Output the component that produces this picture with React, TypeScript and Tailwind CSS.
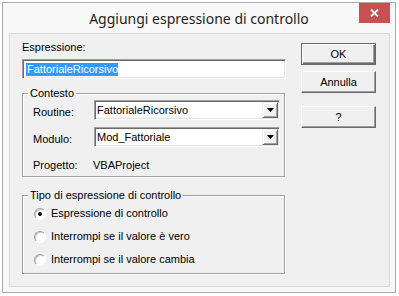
import React from "react";

const font = { fontFamily: '"Liberation Sans", Arial, sans-serif' };

function Combo({ value }: { value: string }) {
  return (
    <div className="w-[186px] h-[20px] flex bg-white border border-t-[#a0a0a0] border-l-[#a0a0a0] border-r-white border-b-white shadow-[inset_1px_1px_0_#696969,inset_-1px_-1px_0_#e3e3e3] p-[1px]">
      <div className="flex-1 flex items-center pl-[1px] text-[11px] leading-[13px] text-black">{value}</div>
      <div className="w-[16px] h-full bg-[#f0f0f0] border border-t-[#f0f0f0] border-l-[#f0f0f0] border-r-[#696969] border-b-[#696969] shadow-[inset_1px_1px_0_#fff,inset_-1px_-1px_0_#a0a0a0] flex items-center justify-center">
        <svg width="7" height="4" viewBox="0 0 7 4">
          <polygon points="0,0 7,0 3.5,4" fill="#000" />
        </svg>
      </div>
    </div>
  );
}

function Radio({ checked, label }: { checked?: boolean; label: string }) {
  return (
    <div className="flex items-center h-[13px] pl-[11px]">
      <div className="w-[12px] h-[12px] rounded-full bg-white border border-t-[#a0a0a0] border-l-[#a0a0a0] border-r-white border-b-white shadow-[inset_1px_1px_0_#c8c8c8] flex items-center justify-center">
        {checked && <div className="w-[4px] h-[4px] rounded-full bg-black" />}
      </div>
      <span className="ml-[5px] text-[11px] leading-[13px] text-black">{label}</span>
    </div>
  );
}

export default function App() {
  return (
    <div className="w-[399px] h-[296px] bg-white p-[2px]" style={font}>
      <div className="w-[394px] h-[291px] border border-[#aaaaaa] bg-[#f8f8f8] flex flex-col">
        <div className="relative h-[30px] flex items-center justify-center">
          <span className="text-[14px] text-[#1e1e1e]" style={{ fontFamily: '"Noto Sans", "Open Sans", sans-serif' }}>
            Aggiungi espressione di controllo
          </span>
          <div className="absolute right-[5px] top-0 w-[31px] h-[20px] bg-[#c75050] flex items-center justify-center">
            <svg width="9" height="8" viewBox="0 0 9 8">
              <path d="M1 0.5 L8 7.5 M8 0.5 L1 7.5" stroke="#fff" strokeWidth="1.8" />
            </svg>
          </div>
        </div>
        <div className="w-[381px] h-[254px] ml-[6px] border border-[#d9d9d9] bg-[#f0f0f0] flex pl-[12px]">
          <div className="w-[264px] pt-[7px] flex flex-col">
            <div className="h-[13px] text-[11px] leading-[13px] text-black">Espressione:</div>
            <div className="mt-[5px] h-[20px] w-[264px] bg-white border border-t-[#a0a0a0] border-l-[#a0a0a0] border-r-white border-b-white shadow-[inset_1px_1px_0_#696969,inset_-1px_-1px_0_#e3e3e3] flex items-center pl-[3px]">
              <span className="bg-[#3399ff] text-white text-[11px] leading-[13px] pl-[1px]">FattorialeRicorsivo</span>
            </div>
            <fieldset className="mt-[8px] w-[263px] border border-[#a0a0a0] shadow-[inset_1px_1px_0_#fff,1px_1px_0_#fff] pb-[4px]">
              <legend className="ml-[5px] px-[2px] bg-[#f0f0f0] text-[11px] leading-[13px] text-black">Contesto</legend>
              <div className="pl-[10px] flex flex-col">
                <div className="flex">
                  <div className="w-[61px] pt-[6px] text-[11px] leading-[13px] text-black">Routine:</div>
                  <Combo value="FattorialeRicorsivo" />
                </div>
                <div className="flex mt-[7px]">
                  <div className="w-[61px] pt-[6px] text-[11px] leading-[13px] text-black">Modulo:</div>
                  <Combo value="Mod_Fattoriale" />
                </div>
                <div className="flex mt-[12px] h-[13px] text-[11px] leading-[13px] text-black">
                  <div className="w-[60px]">Progetto:</div>
                  <div>VBAProject</div>
                </div>
              </div>
            </fieldset>
            <fieldset className="mt-[12px] w-[263px] border border-[#a0a0a0] shadow-[inset_1px_1px_0_#fff,1px_1px_0_#fff] pb-[7px]">
              <legend className="ml-[5px] px-[2px] bg-[#f0f0f0] text-[11px] leading-[13px] text-black">Tipo di espressione di controllo</legend>
              <div className="mt-[5px] flex flex-col gap-[10px]">
                <Radio checked label="Espressione di controllo" />
                <Radio label="Interrompi se il valore è vero" />
                <Radio label="Interrompi se il valore cambia" />
              </div>
            </fieldset>
          </div>
          <div className="ml-[15px] pt-[9px] flex flex-col">
            <button className="w-[75px] h-[22px] bg-[#f0f0f0] border border-[#696969] shadow-[inset_1px_1px_0_#fff,inset_-1px_-1px_0_#696969,inset_-2px_-2px_0_#a0a0a0] text-[11px] leading-[13px] text-black">
              OK
            </button>
            <button className="mt-[6px] w-[75px] h-[22px] bg-[#f0f0f0] border border-t-white border-l-white border-r-[#696969] border-b-[#696969] shadow-[inset_-1px_-1px_0_#a0a0a0] text-[11px] leading-[13px] text-black">
              Annulla
            </button>
            <button className="mt-[13px] w-[75px] h-[22px] bg-[#f0f0f0] border border-t-white border-l-white border-r-[#696969] border-b-[#696969] shadow-[inset_-1px_-1px_0_#a0a0a0] text-[11px] leading-[13px] text-black">
              ?
            </button>
          </div>
        </div>
      </div>
    </div>
  );
}
